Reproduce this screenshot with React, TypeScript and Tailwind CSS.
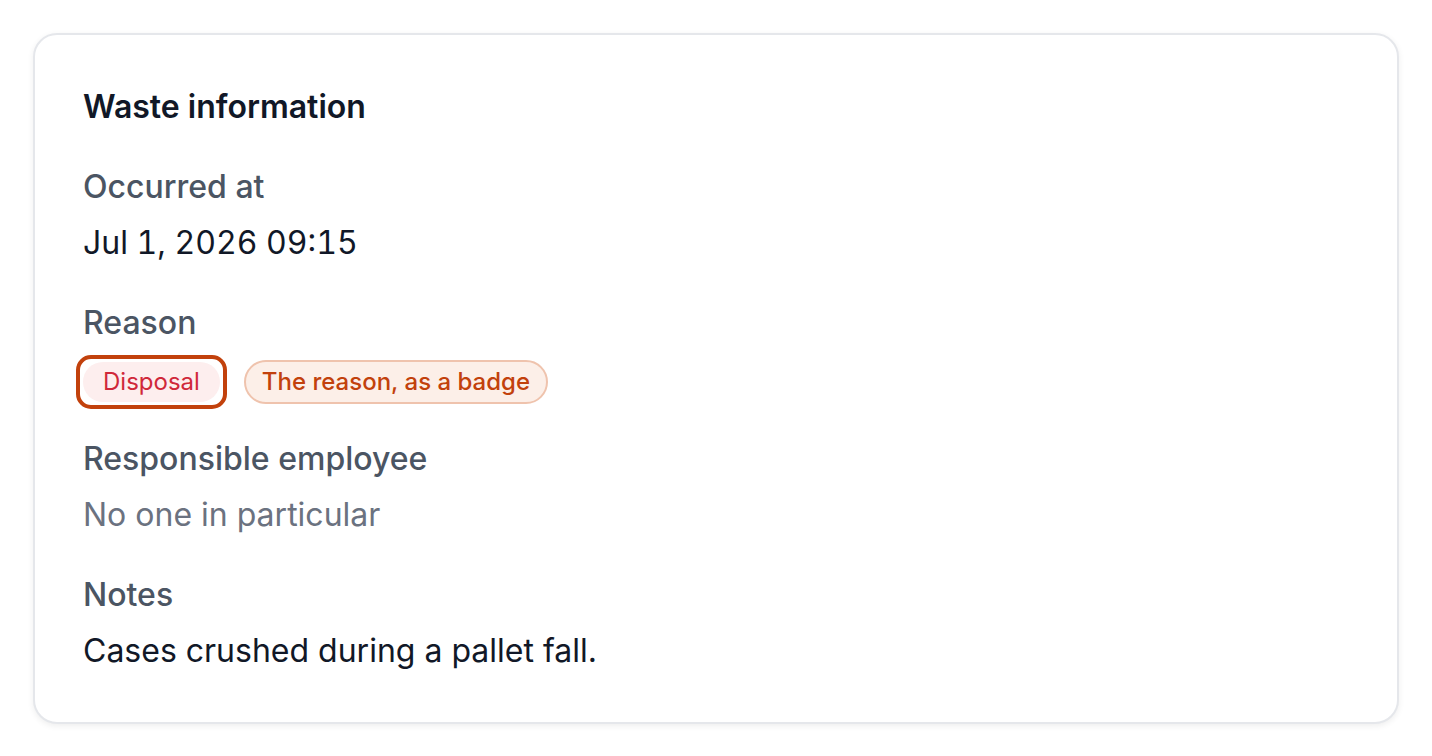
export default function App() {
  return (
    <div className="min-h-screen bg-white p-[33px] font-['Inter','Noto_Sans',sans-serif]">
      <section className="rounded-[24px] border-2 border-[#e5e7eb] bg-white px-[48px] pt-[48px] pb-[47px] shadow-[0_2px_6px_rgba(0,0,0,0.07)]">
        <h2 className="text-[32px] leading-[48px] font-semibold text-[#111827]">Waste information</h2>

        <dl>
          <dt className="mt-[32px] text-[32px] leading-[48px] font-medium text-[#4b5563]">Occurred at</dt>
          <dd className="mt-[8px] text-[32px] leading-[48px] text-[#111827] tabular-nums">Jul 1, 2026 09:15</dd>

          <dt className="mt-[32px] text-[32px] leading-[48px] font-medium text-[#4b5563]">Reason</dt>
          <dd className="mt-[13px] flex h-[44px] items-center gap-[24px]">
            <span className="inline-flex rounded-[8px] outline-4 outline-offset-[3px] outline-[#c2410c]">
              <span className="inline-flex h-[40px] items-center rounded-full bg-[#fdeeee] px-[20px] text-[24px] leading-[32px] text-[#d0283a]">
                Disposal
              </span>
            </span>
            <span className="inline-flex h-[44px] items-center rounded-full border-2 border-[#efc3ad] bg-[#fcefe8] px-[16px] text-[24px] leading-[32px] font-medium text-[#c2410c]">
              The reason, as a badge
            </span>
          </dd>

          <dt className="mt-[31px] text-[32px] leading-[48px] font-medium text-[#4b5563]">Responsible employee</dt>
          <dd className="mt-[8px] text-[32px] leading-[48px] text-[#6b7280]">No one in particular</dd>

          <dt className="mt-[32px] text-[32px] leading-[48px] font-medium text-[#4b5563]">Notes</dt>
          <dd className="mt-[8px] text-[32px] leading-[48px] text-[#111827]">Cases crushed during a pallet fall.</dd>
        </dl>
      </section>
    </div>
  );
}
